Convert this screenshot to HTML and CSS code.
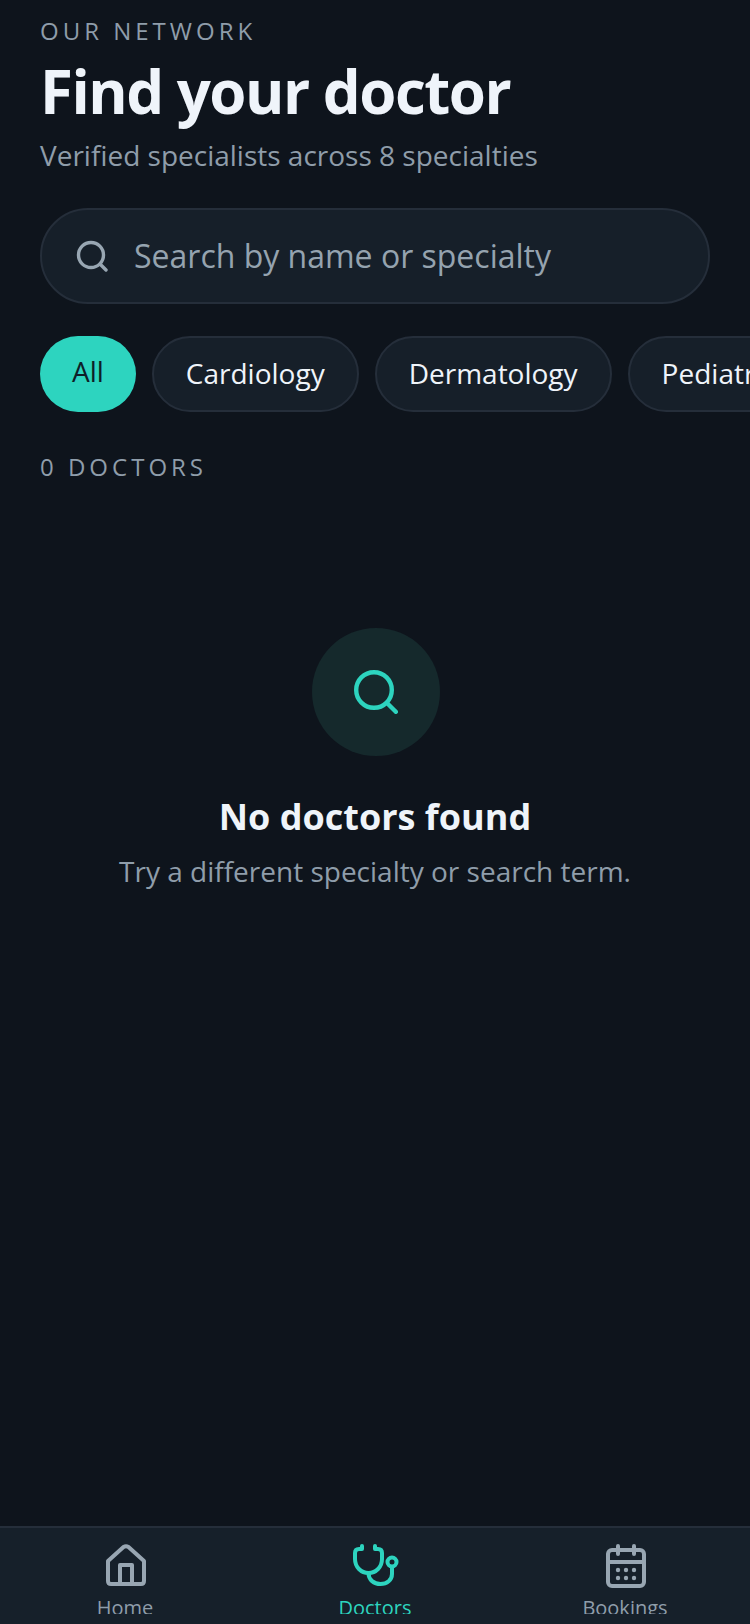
FILE: index.html

```html
<!DOCTYPE html>
<html lang="en">
<head>
  <meta charset="UTF-8" />
  <meta name="viewport" content="width=device-width, initial-scale=1.0"/>
  <title>Find your doctor</title>
  <link rel="stylesheet" href="styles.css">
</head>
<body>
  <div class="screen">
    <main class="content">
      <div class="eyebrow">OUR NETWORK</div>
      <h1 class="title">Find your doctor</h1>
      <p class="subtitle">Verified specialists across 8 specialties</p>

      <div class="search">
        <svg class="search-icon" viewBox="0 0 32 32" fill="none" stroke="currentColor" stroke-width="3.4" stroke-linecap="round">
          <circle cx="15" cy="15" r="12.5"/>
          <path d="M24.5 24.5L30 30"/>
        </svg>
        <span class="search-text">Search by name or specialty</span>
      </div>

      <div class="chips">
        <div class="chip active">All</div>
        <div class="chip">Cardiology</div>
        <div class="chip">Dermatology</div>
        <div class="chip">Pediatrics</div>
      </div>

      <div class="count">0 DOCTORS</div>

      <div class="empty">
        <div class="empty-circle">
          <svg class="empty-icon" viewBox="0 0 44 44" fill="none" stroke="currentColor" stroke-width="4.4" stroke-linecap="round">
            <circle cx="20" cy="20" r="17.8"/>
            <path d="M33 33L41.8 41.8"/>
          </svg>
        </div>
        <h2 class="empty-title">No doctors found</h2>
        <p class="empty-text">Try a different specialty or search term.</p>
      </div>
    </main>

    <nav class="tabbar">
      <div class="tab">
        <svg class="tab-icon" viewBox="-2 0 42 44" fill="none" stroke="currentColor" stroke-width="4" stroke-linejoin="round" stroke-linecap="round">
          <path d="M2 17L17.5 3Q20 1.5 22.5 3L38 17V37Q38 40 35 40H5Q2 40 2 37Z"/>
          <path d="M14 40V21H26V40"/>
        </svg>
        <span class="tab-label">Home</span>
      </div>
      <div class="tab current">
        <svg class="tab-icon" viewBox="-2 0 48 44" fill="none" stroke="currentColor" stroke-width="4" stroke-linecap="round" stroke-linejoin="round">
          <path d="M9 2V5H6Q2 5 2 9V15C2 23 8 29 15.5 29C23 29 29 23 29 15V9Q29 5 25 5H22V2"/>
          <path d="M15.5 29C15.5 36 21 40 27.5 40C34 40 39 36 39 30V23"/>
          <circle cx="39" cy="18" r="4.5"/>
        </svg>
        <span class="tab-label">Doctors</span>
      </div>
      <div class="tab">
        <svg class="tab-icon" viewBox="-2 0 42 44" fill="none" stroke="currentColor" stroke-width="4" stroke-linecap="round" stroke-linejoin="round">
          <rect x="2" y="6" width="36" height="36" rx="4"/>
          <path d="M2 18H38"/>
          <path d="M12 2V10M28 2V10"/>
          <g fill="currentColor" stroke="none">
            <circle cx="12" cy="26" r="2.2"/>
            <circle cx="20" cy="26" r="2.2"/>
            <circle cx="28" cy="26" r="2.2"/>
            <circle cx="12" cy="34" r="2.2"/>
            <circle cx="20" cy="34" r="2.2"/>
            <circle cx="28" cy="34" r="2.2"/>
          </g>
        </svg>
        <span class="tab-label">Bookings</span>
      </div>
    </nav>
  </div>
</body>
</html>
```

FILE: styles.css

```css
* {
  box-sizing: border-box;
}

body {
  margin: 0;
  background: #0e141c;
  font-family: "Open Sans", "Noto Sans", sans-serif;
}

.screen {
  width: 750px;
  height: 1624px;
  display: flex;
  flex-direction: column;
  overflow: hidden;
}

.content {
  flex: 1;
  padding: 14px 0 0 40px;
  overflow: hidden;
}

.eyebrow {
  font-size: 24px;
  line-height: 34px;
  letter-spacing: 4px;
  color: #8f9daa;
}

.title {
  margin: 9px 0 0;
  font-size: 60px;
  line-height: 68px;
  font-weight: 700;
  letter-spacing: -1.5px;
  color: #eff4fa;
}

.subtitle {
  margin: 10px 0 0;
  font-size: 28px;
  line-height: 40px;
  color: #8f9daa;
}

.search {
  width: 670px;
  height: 96px;
  margin-top: 33px;
  padding: 0 34px;
  display: flex;
  align-items: center;
  gap: 26px;
  background: #161f29;
  border: 2px solid #252e3a;
  border-radius: 48px;
}

.search-icon {
  width: 32px;
  height: 32px;
  color: #98a6b2;
}

.search-text {
  margin-top: -2px;
  font-size: 32px;
  color: #95a3af;
}

.chips {
  display: flex;
  gap: 16px;
  margin-top: 32px;
  white-space: nowrap;
}

.chip {
  padding: 15px 32px 17px;
  font-size: 28px;
  line-height: 40px;
  color: #eff4fa;
  background: #161f29;
  border: 2px solid #252e3a;
  border-radius: 38px;
}

.chip.active {
  color: #0e1f29;
  background: #2dd4bf;
  border: none;
}

.count {
  margin-top: 38px;
  font-size: 24px;
  line-height: 34px;
  letter-spacing: 4px;
  color: #8f9daa;
}

.empty {
  margin: 144px 0 0 -40px;
  display: flex;
  flex-direction: column;
  align-items: center;
}

.empty-circle {
  width: 128px;
  height: 128px;
  margin-left: 2px;
  display: flex;
  align-items: center;
  justify-content: center;
  background: #15292c;
  border-radius: 50%;
}

.empty-icon {
  width: 44px;
  height: 44px;
  color: #2dd4bf;
}

.empty-title {
  margin: 36px 0 0;
  font-size: 36px;
  line-height: 50px;
  font-weight: 700;
  color: #eff4fa;
}

.empty-text {
  margin: 9px 0 0;
  font-size: 28px;
  line-height: 40px;
  color: #8f9daa;
}

.tabbar {
  height: 98px;
  padding-bottom: 10px;
  display: flex;
  overflow: hidden;
  background: #16202a;
  border-top: 2px solid #252e3a;
}

.tab {
  flex: 1;
  display: flex;
  flex-direction: column;
  align-items: center;
  padding-top: 16px;
  overflow: hidden;
  color: #8f9daa;
}

.tab.current {
  color: #2dd4bf;
}

.tab-icon {
  height: 44px;
  flex: none;
  color: #98a6b2;
}

.tab.current .tab-icon {
  color: #2dd4bf;
}

.tab-label {
  margin-top: 6px;
  font-size: 20px;
  line-height: 28px;
}
```
